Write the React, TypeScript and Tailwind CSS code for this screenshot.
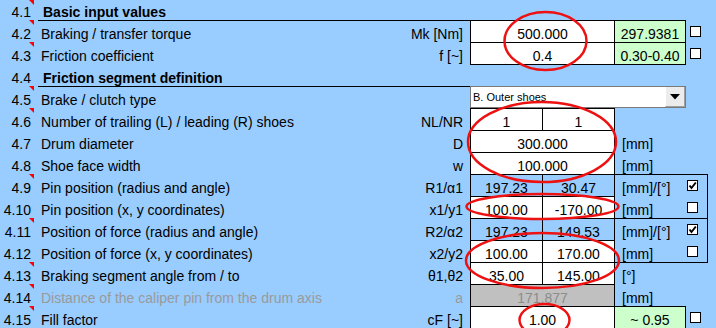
import type { ReactNode } from 'react';

type RowProps = {
  num: string;
  label?: string;
  sym?: string;
  mark?: boolean;
  bold?: boolean;
  grey?: boolean;
  line?: boolean;
  first?: boolean;
  children?: ReactNode;
};

function Row({ num, label, sym, mark, bold, grey, line, first, children }: RowProps) {
  return (
    <div className={`flex ${first ? 'h-[20px]' : 'h-[22px]'}`}>
      <div className="relative w-[34px] shrink-0 flex items-end justify-end pr-[3px] leading-[15px]">
        {mark && (
          <span className="absolute top-0 right-0 w-0 h-0 border-t-[5px] border-l-[5px] border-t-[#ff0000] border-l-transparent" />
        )}
        {num}
      </div>
      <div className="w-[4px] shrink-0" />
      <div
        className={`w-[432px] shrink-0 flex items-end justify-between pr-[7px] leading-[15px] ${
          line ? 'border-t border-black' : ''
        } ${bold ? 'pl-[5px] font-bold' : 'pl-[3px]'} ${grey ? 'text-[#9a9a9a]' : ''}`}
      >
        <span>{label}</span>
        <span>{sym}</span>
      </div>
      <div className="flex">{children}</div>
    </div>
  );
}

function Cell({ className = '', children }: { className?: string; children?: ReactNode }) {
  return (
    <div className={`flex shrink-0 items-end justify-center leading-[15px] border-black ${className}`}>
      {children}
    </div>
  );
}

function Unit({ className = '', children }: { className?: string; children?: ReactNode }) {
  return (
    <div className={`flex w-[72px] shrink-0 items-end pl-[7px] leading-[15px] border-black ${className}`}>
      {children}
    </div>
  );
}

function Check({ checked, className = '' }: { checked?: boolean; className?: string }) {
  return (
    <div className={`w-[22px] shrink-0 flex items-center border-black ${className}`}>
      <div className="w-[11px] h-[11px] border border-black bg-white flex items-center justify-center">
        {checked && (
          <svg width="9" height="9" viewBox="0 0 9 9">
            <path d="M1.5 4.5 L3.5 7 L7.8 1.5" fill="none" stroke="#000" strokeWidth="2" />
          </svg>
        )}
      </div>
    </div>
  );
}

export default function App() {
  return (
    <div className="relative w-[716px] h-[328px] overflow-hidden bg-[#99ccff] text-[14px] text-black font-['Liberation_Sans',Arial,sans-serif]">
      <Row num="4.1" mark bold first label="Basic input values" />
      <Row num="4.2" mark line label="Braking / transfer torque" sym="Mk [Nm]">
        <Cell className="w-[144px] bg-white border-t border-l">500.000</Cell>
        <Cell className="w-[72px] bg-[#ccffcc] border-t border-l border-r">297.9381</Cell>
        <Check className="pl-[4px]" />
      </Row>
      <Row num="4.3" mark label="Friction coefficient" sym="f [~]">
        <Cell className="w-[144px] bg-white border-t border-l">0.4</Cell>
        <Cell className="w-[72px] bg-[#ccffcc] border-t border-l border-r">0.30-0.40</Cell>
        <Check className="pl-[4px]" />
      </Row>
      <Row num="4.4" bold label="Friction segment definition">
        <Cell className="w-[144px] border-t" />
        <Cell className="w-[72px] border-t" />
      </Row>
      <Row num="4.5" mark line label="Brake / clutch type">
        <div className="relative w-[216px] h-[22px] flex items-center bg-white border border-[#7a7a7a]">
          <span className="pl-[2px] text-[11px] leading-[13px]">B. Outer shoes</span>
          <div className="absolute right-0 top-0 bottom-0 w-[20px] flex items-center justify-center bg-[#ececec] border-l border-white border-r border-r-[#a0a0a0] border-b border-b-[#a0a0a0]">
            <svg width="10" height="6" viewBox="0 0 10 6">
              <path d="M0 0 H10 L5 5.5 Z" fill="#000" />
            </svg>
          </div>
        </div>
      </Row>
      <Row num="4.6" mark label="Number of trailing (L) / leading (R) shoes" sym="NL/NR">
        <Cell className="w-[72px] bg-white border-t border-l">1</Cell>
        <Cell className="w-[72px] bg-white border-t border-l">1</Cell>
        <Unit className="border-l" />
      </Row>
      <Row num="4.7" label="Drum diameter" sym="D">
        <Cell className="w-[144px] bg-white border-t border-l">300.000</Cell>
        <Unit className="border-l">[mm]</Unit>
      </Row>
      <Row num="4.8" label="Shoe face width" sym="w">
        <Cell className="w-[144px] bg-white border-t border-l">100.000</Cell>
        <Unit className="border-l">[mm]</Unit>
      </Row>
      <Row num="4.9" mark label="Pin position (radius and angle)" sym="R1/α1">
        <Cell className="w-[72px] border-t border-l">197.23</Cell>
        <Cell className="w-[72px] border-t border-l">30.47</Cell>
        <Unit className="border-t border-l">[mm]/[°]</Unit>
        <Check checked className="pl-[1px] border-t border-r" />
      </Row>
      <Row num="4.10" label="Pin position (x, y coordinates)" sym="x1/y1">
        <Cell className="w-[72px] bg-white border-t border-l">100.00</Cell>
        <Cell className="w-[72px] bg-white border-t border-l">-170.00</Cell>
        <Unit className="border-l">[mm]</Unit>
        <Check className="pl-[1px] border-r" />
      </Row>
      <Row num="4.11" mark label="Position of force (radius and angle)" sym="R2/α2">
        <Cell className="w-[72px] border-t border-l">197.23</Cell>
        <Cell className="w-[72px] border-t border-l">149.53</Cell>
        <Unit className="border-t border-l">[mm]/[°]</Unit>
        <Check checked className="pl-[1px] border-t border-r" />
      </Row>
      <Row num="4.12" label="Position of force (x, y coordinates)" sym="x2/y2">
        <Cell className="w-[72px] bg-white border-t border-l">100.00</Cell>
        <Cell className="w-[72px] bg-white border-t border-l">170.00</Cell>
        <Unit className="border-l">[mm]</Unit>
        <Check className="pl-[1px] border-r" />
      </Row>
      <Row num="4.13" mark label="Braking segment angle from / to" sym="θ1,θ2">
        <Cell className="w-[72px] bg-white border-t border-l">35.00</Cell>
        <Cell className="w-[72px] bg-white border-t border-l">145.00</Cell>
        <Unit className="border-t border-l">[°]</Unit>
        <div className="w-[22px] shrink-0 border-t border-black" />
      </Row>
      <Row num="4.14" mark grey label="Distance of the caliper pin from the drum axis" sym="a">
        <Cell className="w-[144px] bg-[#c0c0c0] border-t border-l text-[#8c8c8c]">171.877</Cell>
        <Unit className="border-l">[mm]</Unit>
      </Row>
      <Row num="4.15" mark label="Fill factor" sym="cF [~]">
        <Cell className="w-[144px] bg-white border-t border-l">1.00</Cell>
        <Cell className="w-[72px] bg-[#ccffcc] border-t border-l border-r">~ 0.95</Cell>
        <Check className="pl-[4px]" />
      </Row>

      {/* red markup ellipses */}
      <svg className="absolute inset-0 pointer-events-none" width="716" height="328" viewBox="0 0 716 328">
        <g fill="none" stroke="#ee1111" strokeWidth="2.5">
          <ellipse cx="545.5" cy="41" rx="41" ry="29" />
          <ellipse cx="542" cy="142" rx="74" ry="40" />
          <ellipse cx="542.5" cy="206.5" rx="76" ry="12.5" />
          <ellipse cx="542.5" cy="260.5" rx="76.5" ry="27.5" />
          <ellipse cx="544.5" cy="320" rx="25" ry="16" />
        </g>
      </svg>
    </div>
  );
}
